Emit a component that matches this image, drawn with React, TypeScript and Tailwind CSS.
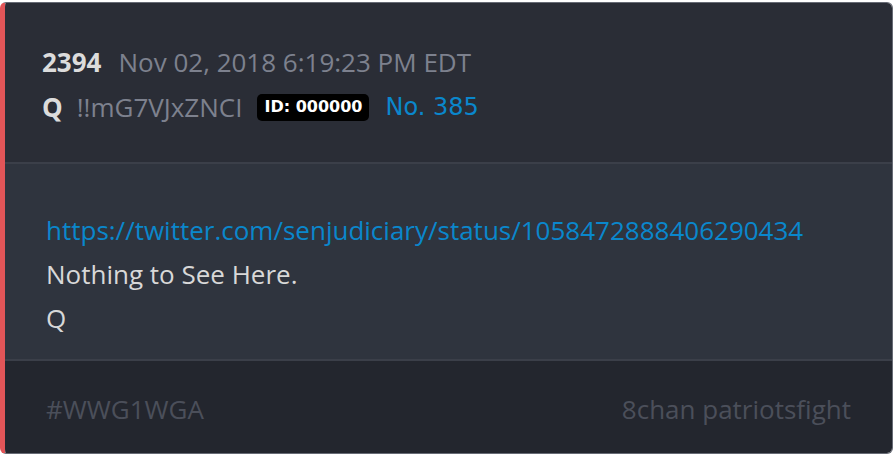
export default function App() {
  return (
    <div className="w-[894px] h-[456px] bg-white pt-[2px]" style={{ fontFamily: '"Open Sans", sans-serif' }}>
      <div className="w-[893px] h-[452px] flex flex-col overflow-hidden rounded-[6px] border border-[#676b75] border-l-[5px] border-l-[#e25558]">
        {/* header */}
        <div className="bg-[#2a2d36] pt-[43px] pb-[39px] pl-[37px] border-b-2 border-[#3b3f49]">
          <div className="flex items-center h-[32px] text-[26px] leading-[32px]">
            <span className="font-bold text-[#dcdcdc]">2394</span>
            <span className="ml-[17px] text-[#7d818e]">Nov 02, 2018 6:19:23 PM EDT</span>
          </div>
          <div className="flex items-center h-[32px] mt-[13px] text-[26px] leading-[32px]">
            <span className="font-bold text-[#dcdcdc]">Q</span>
            <span className="ml-[14px] text-[#7d818e]">!!mG7VJxZNCI</span>
            <span
              className="ml-[15px] h-[27px] px-[7px] flex items-center rounded-[5px] bg-black text-white font-bold text-[16px]"
              style={{ fontFamily: '"DejaVu Sans", sans-serif' }}
            >
              ID: 000000
            </span>
            <span className="ml-[16px] text-[#0a87cc] text-[24px]" style={{ fontFamily: '"DejaVu Sans", sans-serif' }}>
              No. 385
            </span>
          </div>
        </div>
        {/* body */}
        <div className="flex-1 bg-[#2f343e] pt-[44px] pl-[41px] border-b-2 border-[#3b3f49] text-[26px] leading-[44px]">
          <a className="block text-[#0a87cc]">https://twitter.com/senjudiciary/status/1058472888406290434</a>
          <p className="text-[#d8d8d8]">Nothing to See Here.</p>
          <p className="text-[#d8d8d8]">Q</p>
        </div>
        {/* footer */}
        <div className="h-[92px] bg-[#23262e] flex items-start justify-between pt-[33px] pl-[41px] pr-[41px] text-[26px] leading-[30px] text-[#4b4f5a]">
          <span>#WWG1WGA</span>
          <span>8chan patriotsfight</span>
        </div>
      </div>
    </div>
  );
}
